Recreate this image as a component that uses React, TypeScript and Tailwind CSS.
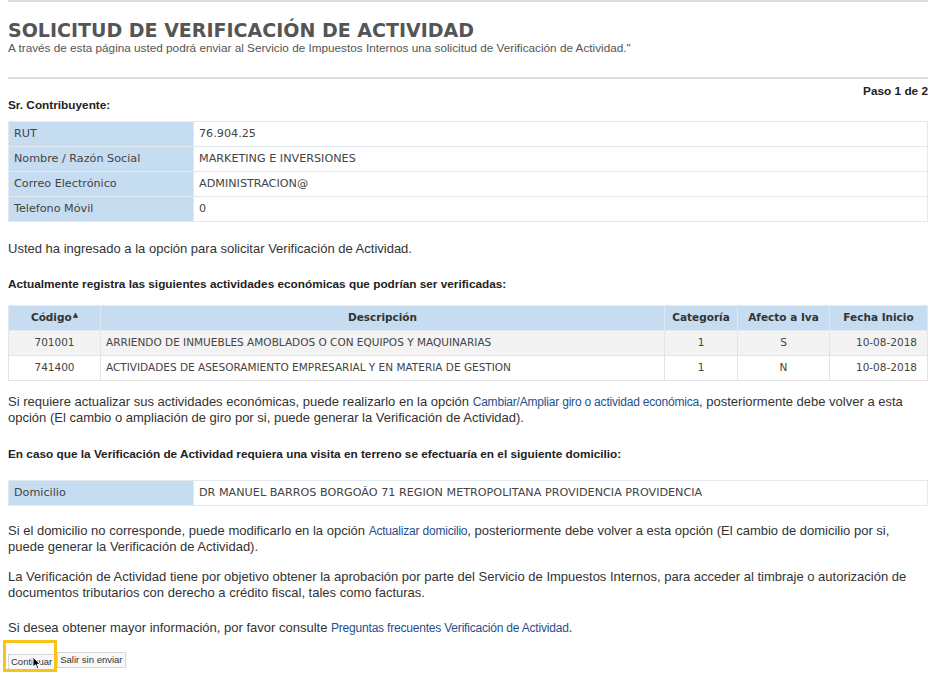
export default function App() {
  const sans = { fontFamily: '"Liberation Sans", Arial, sans-serif' };
  const verdana = { fontFamily: '"DejaVu Sans", Verdana, sans-serif' };
  const info = [
    ["RUT", "76.904.25"],
    ["Nombre / Razón Social", "MARKETING E INVERSIONES"],
    ["Correo Electrónico", "ADMINISTRACION@"],
    ["Telefono Móvil", "0"],
  ];
  const acts = [
    ["701001", "ARRIENDO DE INMUEBLES AMOBLADOS O CON EQUIPOS Y MAQUINARIAS", "1", "S", "10-08-2018"],
    ["741400", "ACTIVIDADES DE ASESORAMIENTO EMPRESARIAL Y EN MATERIA DE GESTION", "1", "N", "10-08-2018"],
  ];

  return (
    <div className="min-h-[678px] w-[941px] bg-white text-[#333]" style={sans}>
      <div className="ml-2 w-[920px]">
        <div className="h-[2px] bg-[#dcdcdc]" />
        <h1 className="mt-[17px] text-[19px] font-bold leading-[22px] text-[#555]" style={verdana}>
          SOLICITUD DE VERIFICACIÓN DE ACTIVIDAD
        </h1>
        <p className="text-[11.75px] leading-[14px] text-[#555]">
          A través de esta página usted podrá enviar al Servicio de Impuestos Internos una solicitud de Verificación de Actividad."
        </p>
        <div className="mt-[22px] h-[2px] bg-[#dcdcdc]" />
        <div className="mt-[5px] text-right text-[11.8px] font-bold leading-[14px] text-[#222]">Paso 1 de 2</div>
        <div className="text-[11.8px] font-bold leading-[14px] text-[#222]">Sr. Contribuyente:</div>

        <table className="mt-[9px] w-full border-collapse text-[11.2px] text-[#444]" style={verdana}>
          <tbody>
            {info.map(([k, v]) => (
              <tr key={k} className="h-[25px]">
                <td className="w-[185px] border border-[#e1e8f0] bg-[#c6dcf1] pl-[5px]">{k}</td>
                <td className="border border-[#e1e8f0] pl-[5px]">{v}</td>
              </tr>
            ))}
          </tbody>
        </table>

        <p className="mt-[19px] text-[13px] leading-[15px]">
          Usted ha ingresado a la opción para solicitar Verificación de Actividad.
        </p>
        <p className="mt-[21px] text-[11.8px] font-bold leading-[14px] text-[#222]">
          Actualmente registra las siguientes actividades económicas que podrían ser verificadas:
        </p>

        <table className="mt-[14px] w-full border-collapse text-[10.5px] text-[#444]" style={verdana}>
          <thead>
            <tr className="h-[25px] bg-[#c6dcf1] font-bold text-[#333]">
              <th className="w-[92px] border border-[#e1e8f0]">
                Código<span className="ml-[1px] align-top text-[7px]">▲</span>
              </th>
              <th className="border border-[#e1e8f0]">Descripción</th>
              <th className="w-[73px] border border-[#e1e8f0]">Categoría</th>
              <th className="w-[92px] border border-[#e1e8f0]">Afecto a Iva</th>
              <th className="w-[98px] border border-[#e1e8f0]">Fecha Inicio</th>
            </tr>
          </thead>
          <tbody>
            {acts.map((r, i) => (
              <tr key={r[0]} className={`h-[25px] ${i === 0 ? "bg-[#f3f3f3]" : "bg-white"}`}>
                <td className="border border-[#e4e4e4] text-center">{r[0]}</td>
                <td className="border border-[#e4e4e4] pl-[5px]">{r[1]}</td>
                <td className="border border-[#e4e4e4] text-center">{r[2]}</td>
                <td className="border border-[#e4e4e4] text-center">{r[3]}</td>
                <td className="border border-[#e4e4e4] pr-[10px] text-right">{r[4]}</td>
              </tr>
            ))}
          </tbody>
        </table>

        <p className="mt-[13px] text-[13px] leading-[16px]">
          Si requiere actualizar sus actividades económicas, puede realizarlo en la opción{" "}
          <a className="text-[12px] tracking-[-0.2px] text-[#1f4f8e]">Cambiar/Ampliar giro o actividad económica</a>, posteriormente debe volver a esta opción (El cambio o ampliación de giro por si, puede generar la Verificación de Actividad).
        </p>
        <p className="mt-[21px] text-[11.8px] font-bold leading-[14px] text-[#222]">
          En caso que la Verificación de Actividad requiera una visita en terreno se efectuaría en el siguiente domicilio:
        </p>

        <table className="mt-[19px] w-full border-collapse text-[11.2px] text-[#444]" style={verdana}>
          <tbody>
            <tr className="h-[25px]">
              <td className="w-[185px] border border-[#e1e8f0] bg-[#c6dcf1] pl-[5px]">Domicilio</td>
              <td className="border border-[#e1e8f0] pl-[5px]">DR MANUEL BARROS BORGOÃO 71 REGION METROPOLITANA PROVIDENCIA PROVIDENCIA</td>
            </tr>
          </tbody>
        </table>

        <p className="mt-[17px] text-[13px] leading-[16px]">
          Si el domicilio no corresponde, puede modificarlo en la opción{" "}
          <a className="text-[12px] tracking-[-0.2px] text-[#1f4f8e]">Actualizar domicilio</a>, posteriormente debe volver a esta opción (El cambio de domicilio por si, puede generar la Verificación de Actividad).
        </p>
        <p className="mt-[14px] text-[13px] leading-[16px]">
          La Verificación de Actividad tiene por objetivo obtener la aprobación por parte del Servicio de Impuestos Internos, para acceder al timbraje o autorización de documentos tributarios con derecho a crédito fiscal, tales como facturas.
        </p>
        <p className="mt-[19px] text-[13px] leading-[16px]">
          Si desea obtener mayor información, por favor consulte{" "}
          <a className="text-[12px] tracking-[-0.2px] text-[#1f4f8e]">Preguntas frecuentes Verificación de Actividad</a>.
        </p>

        <div className="mt-[12px] flex items-center gap-[2px]">
          <div className="relative">
            <button className="h-[16px] border border-[#d6d6d6] bg-[#f8f8f8] px-[2px] text-[9.5px] leading-[14px] text-[#333]">
              Continuar
            </button>
            <div className="pointer-events-none absolute -left-[5px] -top-[8px] h-[32px] w-[54px] border-[3px] border-[#f7c21a]" />
            <svg className="absolute left-[24px] top-[8px]" width="9" height="14" viewBox="0 0 9 14">
              <path d="M1 1 L1 11 L3.5 8.8 L5.3 12.8 L6.8 12.1 L5.1 8.3 L8.2 8.3 Z" fill="#000" stroke="#fff" strokeWidth="1" />
            </svg>
          </div>
          <button className="h-[16px] border border-[#d6d6d6] bg-[#f8f8f8] px-[2px] text-[9.5px] leading-[14px] text-[#333]">
            Salir sin enviar
          </button>
        </div>
      </div>
    </div>
  );
}
